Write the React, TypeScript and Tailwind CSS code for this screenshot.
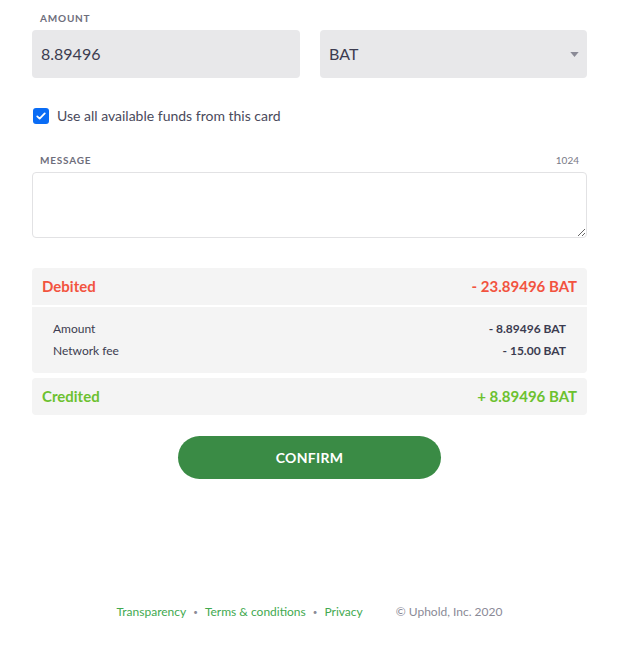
import { useState } from "react";

const Check = () => (
  <svg viewBox="0 0 16 16" className="size-3 text-white" fill="none">
    <path
      d="M3 8.5l3.2 3L13 4.5"
      stroke="currentColor"
      strokeWidth="2.4"
      strokeLinecap="round"
      strokeLinejoin="round"
    />
  </svg>
);

export default function App() {
  const [useAll, setUseAll] = useState(true);
  const [message, setMessage] = useState("");

  return (
    <div className="min-h-[645px] bg-white font-['Lato',sans-serif] text-[#3c3c50] flex flex-col">
      <div className="pl-8 pr-9 pt-3">
        <div className="text-[10px] font-bold tracking-[0.08em] text-[#6e6e7c] pl-2 leading-3">
          AMOUNT
        </div>
        <div className="mt-[6px] flex gap-5">
          <div className="flex-1 h-12 rounded bg-[#e8e8ea] flex items-center px-[9px] text-base">
            8.89496
          </div>
          <div className="flex-1 h-12 rounded bg-[#e8e8ea] flex items-center justify-between pl-[9px] pr-[8px] text-base">
            BAT
            <svg viewBox="0 0 10 6" className="w-[9px] h-[5px]">
              <path d="M0 0h10L5 6z" fill="#8a8a96" />
            </svg>
          </div>
        </div>

        <label className="mt-[28px] flex items-center gap-2 cursor-pointer">
          <span
            onClick={() => setUseAll(!useAll)}
            className={`ml-[1px] size-4 rounded-[3px] flex items-center justify-center ${
              useAll ? "bg-[#0a6cf5]" : "border border-[#999]"
            }`}
          >
            {useAll && <Check />}
          </span>
          <span className="text-sm text-[#4a4a5c]">
            Use all available funds from this card
          </span>
        </label>

        <div className="mt-[28px] flex justify-between px-2 text-[10px] leading-3">
          <span className="font-bold tracking-[0.08em] text-[#6e6e7c]">
            MESSAGE
          </span>
          <span className="text-[#7a7a86]">1024</span>
        </div>
        <textarea
          value={message}
          onChange={(e) => setMessage(e.target.value)}
          className="mt-[6px] block w-full h-[66px] rounded border border-[#e2e2e4] outline-none p-2 text-sm"
        />

        <div className="mt-[30px] rounded bg-[#f4f4f4] overflow-hidden">
          <div className="h-[37px] flex items-center justify-between px-[10px] text-[15px] font-bold text-[#f2533f]">
            <span>Debited</span>
            <span>- 23.89496 BAT</span>
          </div>
          <div className="h-[2px] bg-white" />
          <div className="px-[21px] pt-[15px] pb-[15px] flex flex-col gap-[8px] text-xs leading-[14px]">
            <div className="flex justify-between">
              <span>Amount</span>
              <span className="font-bold">- 8.89496 BAT</span>
            </div>
            <div className="flex justify-between">
              <span>Network fee</span>
              <span className="font-bold">- 15.00 BAT</span>
            </div>
          </div>
        </div>
        <div className="mt-[5px] h-[37px] rounded bg-[#f4f4f4] flex items-center justify-between px-[10px] text-[15px] font-bold text-[#6cc12f]">
          <span>Credited</span>
          <span>+ 8.89496 BAT</span>
        </div>

        <div className="mt-[21px] flex justify-center">
          <button className="w-[263px] h-[43px] rounded-full bg-[#3a8b45] text-white text-sm font-bold tracking-[0.02em]">
            CONFIRM
          </button>
        </div>
      </div>

      <div className="mt-[125px] flex justify-center items-center text-xs pr-[4px]">
        <span className="text-[#42a94f]">Transparency</span>
        <span className="mx-[7px] text-[8px] text-[#8a8a96]">•</span>
        <span className="text-[#42a94f]">Terms &amp; conditions</span>
        <span className="mx-[7px] text-[8px] text-[#8a8a96]">•</span>
        <span className="text-[#42a94f]">Privacy</span>
        <span className="ml-[33px] text-[#8a8a96]">© Uphold, Inc. 2020</span>
      </div>
    </div>
  );
}
